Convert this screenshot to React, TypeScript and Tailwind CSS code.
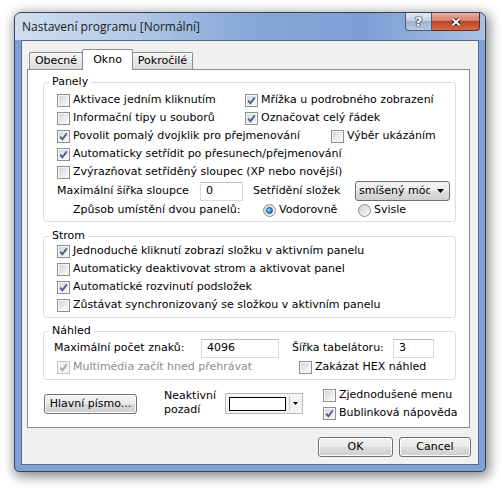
import React from "react";

type CheckProps = { on?: boolean; disabled?: boolean };

const Check = ({ on = false, disabled = false }: CheckProps) => (
  <span
    className={`flex h-[13px] w-[13px] shrink-0 items-center justify-center border ${
      disabled
        ? "border-[#c6c6c6] bg-[#f4f4f4]"
        : "border-[#8e8f8f] bg-[linear-gradient(135deg,#cfd1d5_0%,#e9ebee_55%,#fafafa_100%)]"
    } shadow-[inset_0_0_0_1px_#f7f7f7]`}
  >
    {on && (
      <svg width="11" height="11" viewBox="0 0 11 11">
        <path
          d="M2.2 5.6 L4.4 8.2 L8.8 2.4"
          fill="none"
          stroke={disabled ? "#a8a8a8" : "#4b5d8e"}
          strokeWidth="1.8"
        />
      </svg>
    )}
  </span>
);

const CheckRow = ({
  label,
  on,
  disabled,
  className = "",
}: CheckProps & { label: string; className?: string }) => (
  <div className={`flex items-center gap-[3px] ${disabled ? "text-[#8d8d8d]" : ""} ${className}`}>
    <Check on={on} disabled={disabled} />
    <span className="whitespace-nowrap">{label}</span>
  </div>
);

const Radio = ({ on = false }: { on?: boolean }) => (
  <span className="flex h-[13px] w-[13px] shrink-0 items-center justify-center rounded-full border border-[#8e8f8f] bg-[linear-gradient(135deg,#cfd1d5,#fafafa)]">
    {on && (
      <span className="h-[7px] w-[7px] rounded-full border border-[#1c4f8c] bg-[radial-gradient(circle_at_35%_35%,#b8e6ff_0%,#3d9be6_45%,#1a5aa8_100%)]" />
    )}
  </span>
);

const TextBox = ({ value, className = "" }: { value: string; className?: string }) => (
  <div
    className={`flex items-center border border-[#d6dae2] border-t-[#b9bdc6] bg-white px-[5px] ${className}`}
  >
    {value}
  </div>
);

const Btn = ({ children, className = "" }: { children: React.ReactNode; className?: string }) => (
  <button
    type="button"
    className={`flex items-center justify-center rounded-[3px] border border-[#707070] bg-[linear-gradient(180deg,#f2f2f2_0%,#ebebeb_50%,#dddddd_51%,#cfcfcf_100%)] shadow-[inset_0_0_0_1px_#fbfbfb] ${className}`}
  >
    {children}
  </button>
);

const Arrow = () => (
  <svg width="7" height="4" viewBox="0 0 7 4">
    <path d="M0 0 H7 L3.5 4 Z" fill="#000" />
  </svg>
);

export default function App() {
  return (
    <div className="h-[488px] w-[502px] overflow-hidden bg-white pl-[14px] pt-[12px] font-['DejaVu_Sans',sans-serif] text-[11px] text-black">
      <div className="flex h-[460px] w-[472px] flex-col rounded-t-[7px] rounded-b-[5px] border border-[#35445c] bg-[#7fa2d6] shadow-[2px_3px_12px_2px_rgba(0,0,0,0.45)]">
        {/* title bar */}
        <div className="flex h-[27px] shrink-0 items-start justify-between rounded-t-[6px] bg-[linear-gradient(90deg,#d0deef_0%,#b3c9e6_25%,#86a7d8_50%,#7c9ed3_75%,#a9c1e4_100%)] pl-[7px] pr-[5px]">
          <span className="self-center pt-[1px] font-['Open_Sans',sans-serif] text-[12px] text-[#1b1b1b]">
            Nastavení programu [Normální]
          </span>
          <div className="flex h-[18px]">
            <div className="flex w-[27px] items-center justify-center rounded-bl-[4px] border border-t-0 border-[#4d5d77] bg-[linear-gradient(180deg,#e3ebf5_0%,#c3d3e7_45%,#9cb3d0_50%,#b8cbe3_100%)]">
              <span className="font-bold text-[13px] leading-none text-white [text-shadow:0_0_1px_#1d2a3d,0_0_1px_#1d2a3d,0_0_2px_#1d2a3d]">
                ?
              </span>
            </div>
            <div className="flex w-[48px] items-center justify-center rounded-br-[4px] border border-l-0 border-t-0 border-[#6b2a1f] bg-[linear-gradient(180deg,#eab1a3_0%,#d9806c_45%,#c0432c_50%,#d26a48_100%)]">
              <svg width="12" height="10" viewBox="0 0 12 10">
                <path d="M2.5 1.8 L9.5 8.2 M9.5 1.8 L2.5 8.2" stroke="#3b1810" strokeWidth="3.8" />
                <path d="M2.5 1.8 L9.5 8.2 M9.5 1.8 L2.5 8.2" stroke="#fff" strokeWidth="2" />
              </svg>
            </div>
          </div>
        </div>

        {/* client area */}
        <div className="mx-[6px] mb-[6px] flex flex-1 flex-col border border-[#56698a] bg-[#f0f0f0] pl-[5px] pr-[7px] pt-[8px]">
          {/* tabs */}
          <div className="relative z-10 -mb-px flex h-[21px] items-end">
            <div className="mb-px ml-[2px] flex h-[17px] w-[53px] items-center justify-center rounded-tl-[2px] border border-b-0 border-r-0 border-[#898c95] bg-[linear-gradient(180deg,#f5f5f5_0%,#e8e8e8_50%,#dadada_100%)] pt-[1px]">
              Obecné
            </div>
            <div className="flex h-[21px] w-[51px] items-start justify-center rounded-t-[2px] border border-b-0 border-[#898c95] bg-white pt-[2px]">
              Okno
            </div>
            <div className="mb-px flex h-[17px] w-[60px] items-center justify-center rounded-tr-[2px] border border-b-0 border-l-0 border-[#898c95] bg-[linear-gradient(180deg,#f5f5f5_0%,#e8e8e8_50%,#dadada_100%)] pt-[1px]">
              Pokročilé
            </div>
          </div>

          {/* tab page */}
          <div className="flex h-[359px] w-[443px] flex-col border border-[#898c95] bg-white">
            <fieldset className="ml-[15px] mt-[6px] w-[413px] rounded-[3px] border border-[#d5dfe5]">
              <legend className="ml-[5px] px-[3px] leading-[12px]">Panely</legend>
              <div className="flex flex-col pb-[2px] pl-[13px] pt-[4px]">
                <div className="flex h-[17px] items-center">
                  <CheckRow className="w-[188px]" label="Aktivace jedním kliknutím" />
                  <CheckRow on label="Mřížka u podrobného zobrazení" />
                </div>
                <div className="flex h-[18px] items-center">
                  <CheckRow className="w-[188px]" label="Informační tipy u souborů" />
                  <CheckRow on label="Označovat celý řádek" />
                </div>
                <div className="flex h-[18px] items-center">
                  <CheckRow on className="w-[274px]" label="Povolit pomalý dvojklik pro přejmenování" />
                  <CheckRow label="Výběr ukázáním" />
                </div>
                <div className="flex h-[18px] items-center">
                  <CheckRow on label="Automaticky setřídit po přesunech/přejmenování" />
                </div>
                <div className="flex h-[18px] items-center">
                  <CheckRow label="Zvýrazňovat setříděný sloupec (XP nebo novější)" />
                </div>
                <div className="flex h-[20px] items-center">
                  <span className="w-[143px] whitespace-nowrap">Maximální šířka sloupce</span>
                  <TextBox value="0" className="h-[19px] w-[43px]" />
                  <span className="ml-[10px] w-[102px] whitespace-nowrap">Setřídění složek</span>
                  <div className="flex h-[20px] w-[95px] items-center rounded-[3px] border border-[#707070] bg-[linear-gradient(180deg,#f2f2f2_0%,#ebebeb_50%,#dddddd_51%,#cfcfcf_100%)] pl-[3px] pr-[5px]">
                    <span className="w-[71px] overflow-hidden whitespace-nowrap">smíšený mód</span>
                    <span className="ml-auto flex">
                      <Arrow />
                    </span>
                  </div>
                </div>
                <div className="flex h-[18px] items-center pl-[16px]">
                  <span className="w-[190px] whitespace-nowrap">Způsob umístění dvou panelů:</span>
                  <div className="flex w-[95px] items-center gap-[3px]">
                    <Radio on />
                    <span>Vodorovně</span>
                  </div>
                  <div className="flex items-center gap-[3px]">
                    <Radio />
                    <span>Svisle</span>
                  </div>
                </div>
              </div>
            </fieldset>

            <fieldset className="ml-[15px] mt-[8px] w-[413px] rounded-[3px] border border-[#d5dfe5]">
              <legend className="ml-[5px] px-[3px] leading-[12px]">Strom</legend>
              <div className="flex flex-col pb-[3px] pl-[13px]">
                <CheckRow on className="h-[18px]" label="Jednoduché kliknutí zobrazí složku v aktivním panelu" />
                <CheckRow className="h-[18px]" label="Automaticky deaktivovat strom a aktivovat panel" />
                <CheckRow on className="h-[18px]" label="Automatické rozvinutí podsložek" />
                <CheckRow className="h-[18px]" label="Zůstávat synchronizovaný se složkou v aktivním panelu" />
              </div>
            </fieldset>

            <fieldset className="ml-[15px] mt-[7px] w-[413px] rounded-[3px] border border-[#d5dfe5]">
              <legend className="ml-[5px] px-[3px] leading-[12px]">Náhled</legend>
              <div className="flex flex-col pb-[3px] pl-[10px] pt-[2px]">
                <div className="flex h-[19px] items-center">
                  <span className="w-[147px] whitespace-nowrap">Maximální počet znaků:</span>
                  <TextBox value="4096" className="h-[19px] w-[78px]" />
                  <span className="ml-[13px] w-[101px] whitespace-nowrap">Šířka tabelátoru:</span>
                  <TextBox value="3" className="h-[19px] w-[41px]" />
                </div>
                <div className="flex h-[18px] items-center pl-[3px]">
                  <CheckRow on disabled className="w-[242px]" label="Multimédia začít hned přehrávat" />
                  <CheckRow label="Zakázat HEX náhled" />
                </div>
              </div>
            </fieldset>

            <div className="mt-[6px] flex items-start pl-[16px]">
              <Btn className="mt-[8px] h-[20px] w-[93px]">Hlavní písmo...</Btn>
              <div className="ml-[27px] mt-[3px] w-[61px] leading-[14px]">
                Neaktivní
                <br />
                pozadí
              </div>
              <div className="mt-[7px] flex h-[21px] w-[78px] items-center border border-[#b9b9b9] bg-[#f3f3f3] py-[2px] pl-[3px] pr-[1px]">
                <span className="h-[14px] flex-1 border border-black bg-white" />
                <span className="ml-[3px] flex h-full w-[12px] items-center justify-center border-l border-[#c8c8c8]">
                  <svg width="5" height="3" viewBox="0 0 5 3">
                    <path d="M0 0 H5 L2.5 3 Z" fill="#000" />
                  </svg>
                </span>
              </div>
              <div className="ml-[20px] flex flex-col">
                <CheckRow className="h-[18px]" label="Zjednodušené menu" />
                <CheckRow on className="h-[18px]" label="Bublinková nápověda" />
              </div>
            </div>
          </div>

          {/* dialog buttons */}
          <div className="mt-[9px] flex justify-end gap-[6px]">
            <Btn className="h-[20px] w-[75px]">OK</Btn>
            <Btn className="h-[20px] w-[72px]">Cancel</Btn>
          </div>
        </div>
      </div>
    </div>
  );
}
